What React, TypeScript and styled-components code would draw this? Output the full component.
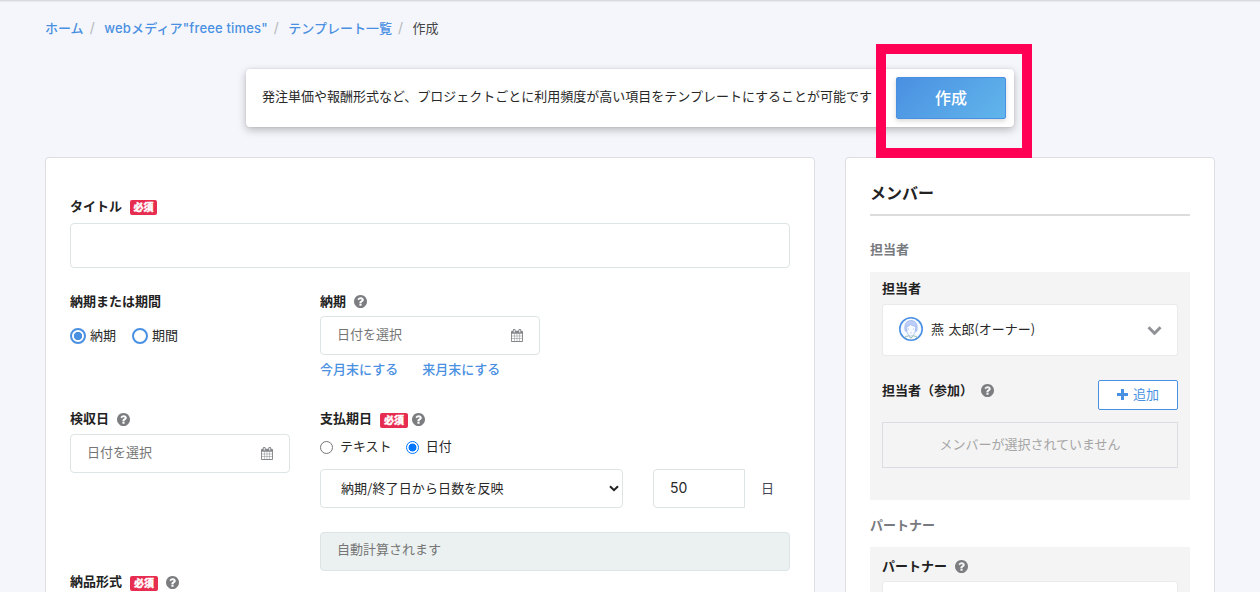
import React from 'react';
import styled, { createGlobalStyle, css } from 'styled-components';

const GlobalStyle = createGlobalStyle`
  *, *::before, *::after { box-sizing: border-box; }
  html, body { margin: 0; height: 100%; overflow: hidden; }
  body {
    background: #f5f6fb;
    color: #282828;
    font: 13px/20px "Noto Sans CJK JP", sans-serif;
  }
  button, input, select { font: inherit; color: inherit; }
`;

const Page = styled.div`
  height: 592px;
  overflow: hidden;
  padding: 0 45px;
  border-top: 1px solid #d9dade;
  box-shadow: inset 0 1px 0 #e8e9ee;
`;

const Breadcrumb = styled.nav`
  display: flex;
  height: 20px;
  margin-top: 17px;
  white-space: nowrap;
  color: #444;
`;

const Crumb = styled.a<{ $latin?: boolean }>`
  color: #4a90e2;
  font-weight: 500;
  ${(p) => p.$latin && css`
    font-family: Inter, "Noto Sans CJK JP", sans-serif;
    letter-spacing: 0.17px;
  `}
`;

const Slash = styled.span`
  width: 20.6px;
  padding-left: 6px;
  color: #b4b6ba;
  font: 14px/20px Inter, sans-serif;
`;

const Notice = styled.section`
  display: flex;
  align-items: center;
  justify-content: space-between;
  width: 768px;
  height: 58px;
  margin: 31px auto 30px 201px;
  padding: 0 8px 0 16px;
  background: #fff;
  border-radius: 4px;
  box-shadow: 0 3px 8px rgba(0, 0, 0, 0.25), 0 0 2px rgba(0, 0, 0, 0.12);
`;

const NoticeText = styled.p`
  margin: 0 0 5px;
  white-space: nowrap;
`;

const ButtonSlot = styled.div`
  position: relative;
`;

const CreateButton = styled.button`
  display: block;
  width: 110px;
  height: 42px;
  padding: 0 0 3px;
  border: 1px solid #4a90e2;
  border-radius: 2px;
  background: linear-gradient(135deg, #4a90e2, #61b5eb);
  box-shadow: 0 2px 5px rgba(0, 0, 0, 0.16);
  color: #fff;
  font-size: 16px;
  font-weight: 500;
`;

const Highlight = styled.div`
  position: absolute;
  top: -33px;
  left: -20px;
  width: 156px;
  height: 114px;
  border: 10px solid #ff0055;
  pointer-events: none;
`;

const Columns = styled.div`
  display: grid;
  grid-template-columns: 770px 370px;
  gap: 30px;
`;

const Panel = styled.section<{ $top: number }>`
  height: 500px;
  padding: ${(p) => p.$top}px 24px 0;
  background: #fff;
  border: 1px solid #dcdee2;
  border-radius: 4px;
`;

const Label = styled.div<{ $muted?: boolean }>`
  display: flex;
  align-items: center;
  height: 20px;
  font-weight: 700;
  white-space: nowrap;
  color: ${(p) => (p.$muted ? '#777a7e' : '#222')};
`;

const LabelText = styled.span`
  margin-bottom: 2px;
`;

const Required = styled.span<{ $wide?: boolean }>`
  width: ${(p) => (p.$wide ? 28 : 27)}px;
  height: 15px;
  margin: 2px 0 0 8px;
  border-radius: 2px;
  background: #e62d50;
  color: #fff;
  font-size: 10px;
  font-weight: 900;
  line-height: 14px;
  text-align: center;
  -webkit-text-stroke: 0.3px #fff;
`;

const HelpSvg = styled.svg<{ $gap: number }>`
  width: 13px;
  height: 13px;
  margin-left: ${(p) => p.$gap}px;
  fill: #7b7d80;
`;

const Help = ({ gap = 8 }: { gap?: number }) => (
  <HelpSvg $gap={gap} viewBox="128 128 1536 1536">
    <path d="M1024 1376v-192q0-14-9-23t-23-9h-192q-14 0-23 9t-9 23v192q0 14 9 23t23 9h192q14 0 23-9t9-23zM1280 704q0-88-55.500-163t-138.500-116-170-41q-243 0-371 213-15 24 8 42l132 100q7 6 19 6 16 0 25-12 53-68 86-92 34-24 86-24 48 0 85.500 26t37.500 59q0 38-20 61t-68 45q-63 28-115.500 86.500t-52.500 125.500v36q0 14 9 23t23 9h192q14 0 23-9t9-23q0-19 21.500-49.500t54.500-49.500q32-18 49-28.500t46-35 44.500-48 28-60.500 12.500-81zM1664 896q0 209-103 385.500t-279.500 279.500-385.500 103-385.500-103-279.500-279.500-103-385.500 103-385.500 279.500-279.500 385.500-103 385.500 103 279.500 279.500 103 385.500z" />
  </HelpSvg>
);

const CalendarSvg = styled.svg`
  width: 12px;
  height: 13px;
  margin-bottom: 1px;
  fill: #85878a;
`;

const Calendar = () => (
  <CalendarSvg viewBox="0 0 1664 1792" preserveAspectRatio="none">
    <path d="M128 1664h288v-288h-288v288zM480 1664h320v-288h-320v288zM128 1312h288v-320h-288v320zM480 1312h320v-320h-320v320zM128 928h288v-288h-288v288zM864 1664h320v-288h-320v288zM480 928h320v-288h-320v288zM1248 1664h288v-288h-288v288zM864 1312h320v-320h-320v320zM512 448v-288q0-13-9.500-22.500t-22.500-9.500h-64q-13 0-22.500 9.500t-9.500 22.500v288q0 13 9.500 22.500t22.500 9.500h64q13 0 22.500-9.500t9.500-22.500zM1248 1312h288v-320h-288v320zM864 928h320v-288h-320v288zM1248 928h288v-288h-288v288zM1280 448v-288q0-13-9.500-22.500t-22.500-9.500h-64q-13 0-22.500 9.500t-9.500 22.500v288q0 13 9.500 22.500t22.500 9.500h64q13 0 22.500-9.500t9.500-22.500zM1664 384v1280q0 52-38 90t-90 38h-1408q-52 0-90-38t-38-90v-1280q0-52 38-90t90-38h128v-96q0-66 47-113t113-47h64q66 0 113 47t47 113v96h384v-96q0-66 47-113t113-47h64q66 0 113 47t47 113v96h128q52 0 90 38t38 90z" />
  </CalendarSvg>
);

const TitleInput = styled.input`
  display: block;
  width: 720px;
  height: 45px;
  margin: 7px 0 23px;
  border: 1px solid #dce4e6;
  border-radius: 4px;
  background: #fff;
`;

const FormRow = styled.div<{ $height: number }>`
  display: grid;
  grid-template-columns: 220px 470px;
  gap: 30px;
  height: ${(p) => p.$height}px;
`;

const Field = styled.div``;

const DateBox = styled.div`
  display: flex;
  align-items: center;
  justify-content: space-between;
  width: 220px;
  height: 39px;
  margin-top: 5px;
  padding: 0 16px 0 16px;
  border: 1px solid #dce4e6;
  border-radius: 4px;
  color: #757575;

  span { margin-bottom: 3px; }
`;

const DateLinks = styled.div`
  display: flex;
  gap: 24px;
  margin-top: 4px;
  color: #4a90e2;
  font-weight: 500;
`;

const RadioGroup = styled.div<{ $top: number; $gap: number }>`
  display: flex;
  gap: ${(p) => p.$gap}px;
  margin-top: ${(p) => p.$top}px;
`;

const Option = styled.label<{ $gap: number }>`
  display: flex;
  align-items: center;
  gap: ${(p) => p.$gap}px;
  height: 20px;
`;

const Dot = styled.span<{ $on?: boolean }>`
  width: 16px;
  height: 16px;
  margin-top: 1px;
  border: 2px solid #4a90e2;
  border-radius: 50%;
  background: ${(p) => (p.$on ? 'radial-gradient(circle, #4a90e2 3.8px, #fff 4.5px)' : '#fff')};
`;

const SmallDot = styled.span<{ $on?: boolean }>`
  width: 13px;
  height: 13px;
  margin-top: 2px;
  border: 1px solid ${(p) => (p.$on ? '#0075ff' : '#767676')};
  border-radius: 50%;
  background: ${(p) => (p.$on ? 'radial-gradient(circle, #0075ff 3.6px, #fff 4.3px)' : '#fff')};
`;

const TermRow = styled.div`
  display: flex;
  align-items: center;
  height: 39px;
  margin-top: 13px;
`;

const TermSelect = styled.div`
  display: flex;
  align-items: center;
  justify-content: space-between;
  width: 303px;
  height: 39px;
  padding: 0 3px 1px 20px;
  border: 1px solid #dce4e6;
  border-radius: 4px;
  letter-spacing: 0.12px;
`;

const DaysInput = styled.input`
  width: 92px;
  height: 39px;
  margin: 0 16px 0 30px;
  padding: 0 16px 3px;
  border: 1px solid #dce4e6;
  border-radius: 4px 0 0 4px;
  outline: 0;
  font-family: Inter, sans-serif;
  font-size: 14px;
`;

const Unit = styled.span`
  margin-bottom: 2px;
  color: #44475a;
`;

const AutoBox = styled.div`
  height: 39px;
  margin-top: 24px;
  padding: 6px 16px;
  border: 1px solid #dce4e6;
  border-radius: 4px;
  background: #ebf1f1;
  color: #757575;
`;

const Heading = styled.h2`
  height: 35px;
  margin: 0 0 23px;
  border-bottom: 2px solid #dcdcdc;
  font-size: 16px;
  line-height: 22px;
  color: #222;
`;

const Group = styled.div<{ $height: number; $top: number }>`
  height: ${(p) => p.$height}px;
  margin-bottom: 15px;
  padding: ${(p) => p.$top}px 12px 0;
  background: #f4f4f4;
`;

const GroupTitle = styled(Label)<{ $gap: number }>`
  margin-bottom: ${(p) => p.$gap}px;
`;

const MemberSelect = styled.div`
  display: flex;
  align-items: center;
  width: 296px;
  height: 52px;
  margin: 5px 0 24px;
  padding: 0 15px 0 16px;
  background: #fff;
  border: 1px solid #e8eaeb;
  border-radius: 3px;
`;

const AvatarSvg = styled.svg`
  width: 24px;
  height: 24px;
  margin: 0 8px 2px 0;
`;

const Avatar = () => (
  <AvatarSvg viewBox="0 0 24 24" fill="none">
    <circle cx="12" cy="12" r="11.2" fill="#f7faff" stroke="#4a90e2" strokeWidth="1.6" />
    <path d="M6.2 14C4.8 7.6 7 3.7 12 3.5c5 .2 7.200 4.100 5.800 10.500l-1.300.5.1-5.400c-2.500.2-4.100-.7-5.100-1.900-.9 1.500-2.100 2.200-3.800 2.500l.1 4.800z" fill="#bccdf8" stroke="#8eabed" strokeWidth=".6" />
    <path d="M7.500 12.500c.2 3.500 2 6.200 4.500 6.700 2.500-.5 4.300-3.200 4.500-6.700" stroke="#a5bcf0" strokeWidth=".8" />
    <path d="M9.500 11.600v1m5-1v1M11.400 15.900h1.200" stroke="#8cadeb" strokeWidth=".8" />
    <path d="M5.500 20.500c1-1 2.600-1.400 4-1.700l2.500 2.400 2.500-2.400c1.400.3 3 .7 4 1.700" stroke="#91b5a5" strokeWidth="1" />
  </AvatarSvg>
);

const MemberName = styled.span`
  flex: 1;
  margin-bottom: 2px;
  word-spacing: 1.5px;
`;

const LabelRow = styled.div`
  display: flex;
  justify-content: space-between;
  height: 30px;
`;

const AddButton = styled.button`
  display: flex;
  align-items: center;
  justify-content: center;
  gap: 5px;
  width: 80px;
  height: 30px;
  padding: 0 0 2px;
  border: 1px solid #4a90e2;
  border-radius: 2px;
  background: #fff;
  color: #4a90e2;

  span { margin-bottom: 1px; }
`;

const EmptyBox = styled.div`
  height: 46px;
  margin-top: 12px;
  border: 1px solid #dadde2;
  color: #a5a5a5;
  line-height: 41px;
  text-align: center;
`;

export default function App() {
  return (
    <>
      <GlobalStyle />
      <Page>
        <Breadcrumb>
          <Crumb>ホーム</Crumb>
          <Slash>/</Slash>
          <Crumb $latin>webメディア"freee times"</Crumb>
          <Slash>/</Slash>
          <Crumb>テンプレート一覧</Crumb>
          <Slash>/</Slash>
          <span>作成</span>
        </Breadcrumb>
        <Notice>
          <NoticeText>発注単価や報酬形式など、プロジェクトごとに利用頻度が高い項目をテンプレートにすることが可能です</NoticeText>
          <ButtonSlot>
            <CreateButton>作成</CreateButton>
            <Highlight />
          </ButtonSlot>
        </Notice>
        <Columns>
          <Panel $top={38}>
            <Label>タイトル<Required>必須</Required></Label>
            <TitleInput />
            <FormRow $height={118}>
              <Field>
                <Label>納期または期間</Label>
                <RadioGroup $top={14} $gap={16}>
                  <Option $gap={4}><Dot $on />納期</Option>
                  <Option $gap={4}><Dot />期間</Option>
                </RadioGroup>
              </Field>
              <Field>
                <Label>納期<Help /></Label>
                <DateBox><span>日付を選択</span><Calendar /></DateBox>
                <DateLinks><span>今月末にする</span><span>来月末にする</span></DateLinks>
              </Field>
            </FormRow>
            <FormRow $height={163}>
              <Field>
                <Label><LabelText>検収日</LabelText><Help /></Label>
                <DateBox><span>日付を選択</span><Calendar /></DateBox>
              </Field>
              <Field>
                <Label><LabelText>支払期日</LabelText><Required $wide>必須</Required><Help gap={4} /></Label>
                <RadioGroup $top={7} $gap={14}>
                  <Option $gap={7}><SmallDot />テキスト</Option>
                  <Option $gap={7}><SmallDot $on />日付</Option>
                </RadioGroup>
                <TermRow>
                  <TermSelect>
                    納期/終了日から日数を反映
                    <svg width="10" height="7" viewBox="0 0 10 7" fill="none" stroke="#222" strokeWidth="2">
                      <path d="M1 1.200l4 4 4-4" />
                    </svg>
                  </TermSelect>
                  <DaysInput defaultValue="50" />
                  <Unit>日</Unit>
                </TermRow>
                <AutoBox>自動計算されます</AutoBox>
              </Field>
            </FormRow>
            <Label><LabelText>納品形式</LabelText><Required $wide>必須</Required><Help /></Label>
          </Panel>
          <Panel $top={23}>
            <Heading>メンバー</Heading>
            <GroupTitle $muted $gap={13}>担当者</GroupTitle>
            <Group $height={228} $top={7}>
              <Label><LabelText>担当者</LabelText></Label>
              <MemberSelect>
                <Avatar />
                <MemberName>燕 太郎(オーナー)</MemberName>
                <svg width="15" height="9" viewBox="0 0 15 9" fill="none" stroke="#919396" strokeWidth="3">
                  <path d="M1.500 1.300l6 6 6-6" />
                </svg>
              </MemberSelect>
              <LabelRow>
                <Label>担当者（参加）<Help gap={8} /></Label>
                <AddButton>
                  <svg width="11" height="11" viewBox="0 0 11 11" fill="none" stroke="#4a90e2" strokeWidth="3">
                    <path d="M5.500 0v11M0 5.500h11" />
                  </svg>
                  <span>追加</span>
                </AddButton>
              </LabelRow>
              <EmptyBox>メンバーが選択されていません</EmptyBox>
            </Group>
            <GroupTitle $muted $gap={12}>パートナー</GroupTitle>
            <Group $height={200} $top={9}>
              <Label>パートナー<Help /></Label>
              <MemberSelect />
            </Group>
          </Panel>
        </Columns>
      </Page>
    </>
  );
}
